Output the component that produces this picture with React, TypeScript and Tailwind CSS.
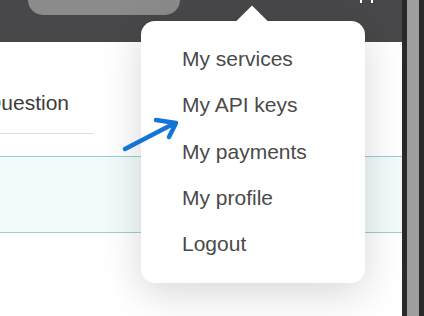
const MENU = ['My services', 'My API keys', 'My payments', 'My profile', 'Logout'];

export default function App() {
  return (
    <div className="relative flex h-[316px] w-[424px] overflow-hidden bg-white font-['Liberation_Sans',Arial,sans-serif]">
      {/* page */}
      <div className="flex w-[402px] flex-col">
        <header className="relative flex h-[42px] items-start bg-[#48484a] pl-[28px]">
          <div className="-mt-[16px] h-[31px] w-[152px] rounded-[15px] bg-[#8b8b8b]" />
          {/* descenders of a cut-off label */}
          <div className="absolute left-[360px] top-0 flex gap-[9px]">
            <span className="h-[3px] w-[2px] bg-white" />
            <span className="h-[3px] w-[2px] bg-white" />
          </div>
        </header>

        <div className="flex flex-col">
          <div className="-ml-[15px] mt-[49px] h-[24px] text-[21px] leading-[24px] text-[#3c3c3c]">Question</div>
          <div className="mt-[18px] h-px w-[93px] bg-[#dcdcdc]" />
          <div className="mt-[22px] h-[77px] border-y border-[#91d4ce] bg-[#f3fafa]" />
        </div>
      </div>

      {/* scrollbar strip */}
      <div className="w-[5px] bg-[#2a2a2a]" />
      <div className="w-[12px] bg-[#9e9e9e]" />
      <div className="w-[5px] bg-[#2a2a2a]" />

      {/* account dropdown */}
      <div className="absolute left-[141px] top-[21px] h-[262px] w-[224px] rounded-[14px] bg-white pl-[41px] pt-[15px] shadow-[0_10px_40px_rgba(0,0,0,0.16)]">
        <div className="absolute -top-[11px] left-[100px] h-[22px] w-[22px] rotate-45 bg-white" />
        <ul className="relative">
          {MENU.map((item) => (
            <li key={item} className="text-[21px] leading-[46.3px] text-[#4a4a4a]">
              {item}
            </li>
          ))}
        </ul>
      </div>

      {/* pointer arrow, drawn over the dropdown */}
      <svg className="absolute left-0 top-0" width="424" height="316" viewBox="0 0 424 316" fill="none">
        <path
          d="M125 149 L175 123 M156 120 L176 123 L169 137"
          stroke="#1673d8"
          strokeWidth="4.5"
          strokeLinecap="round"
          strokeLinejoin="round"
        />
      </svg>
    </div>
  );
}
